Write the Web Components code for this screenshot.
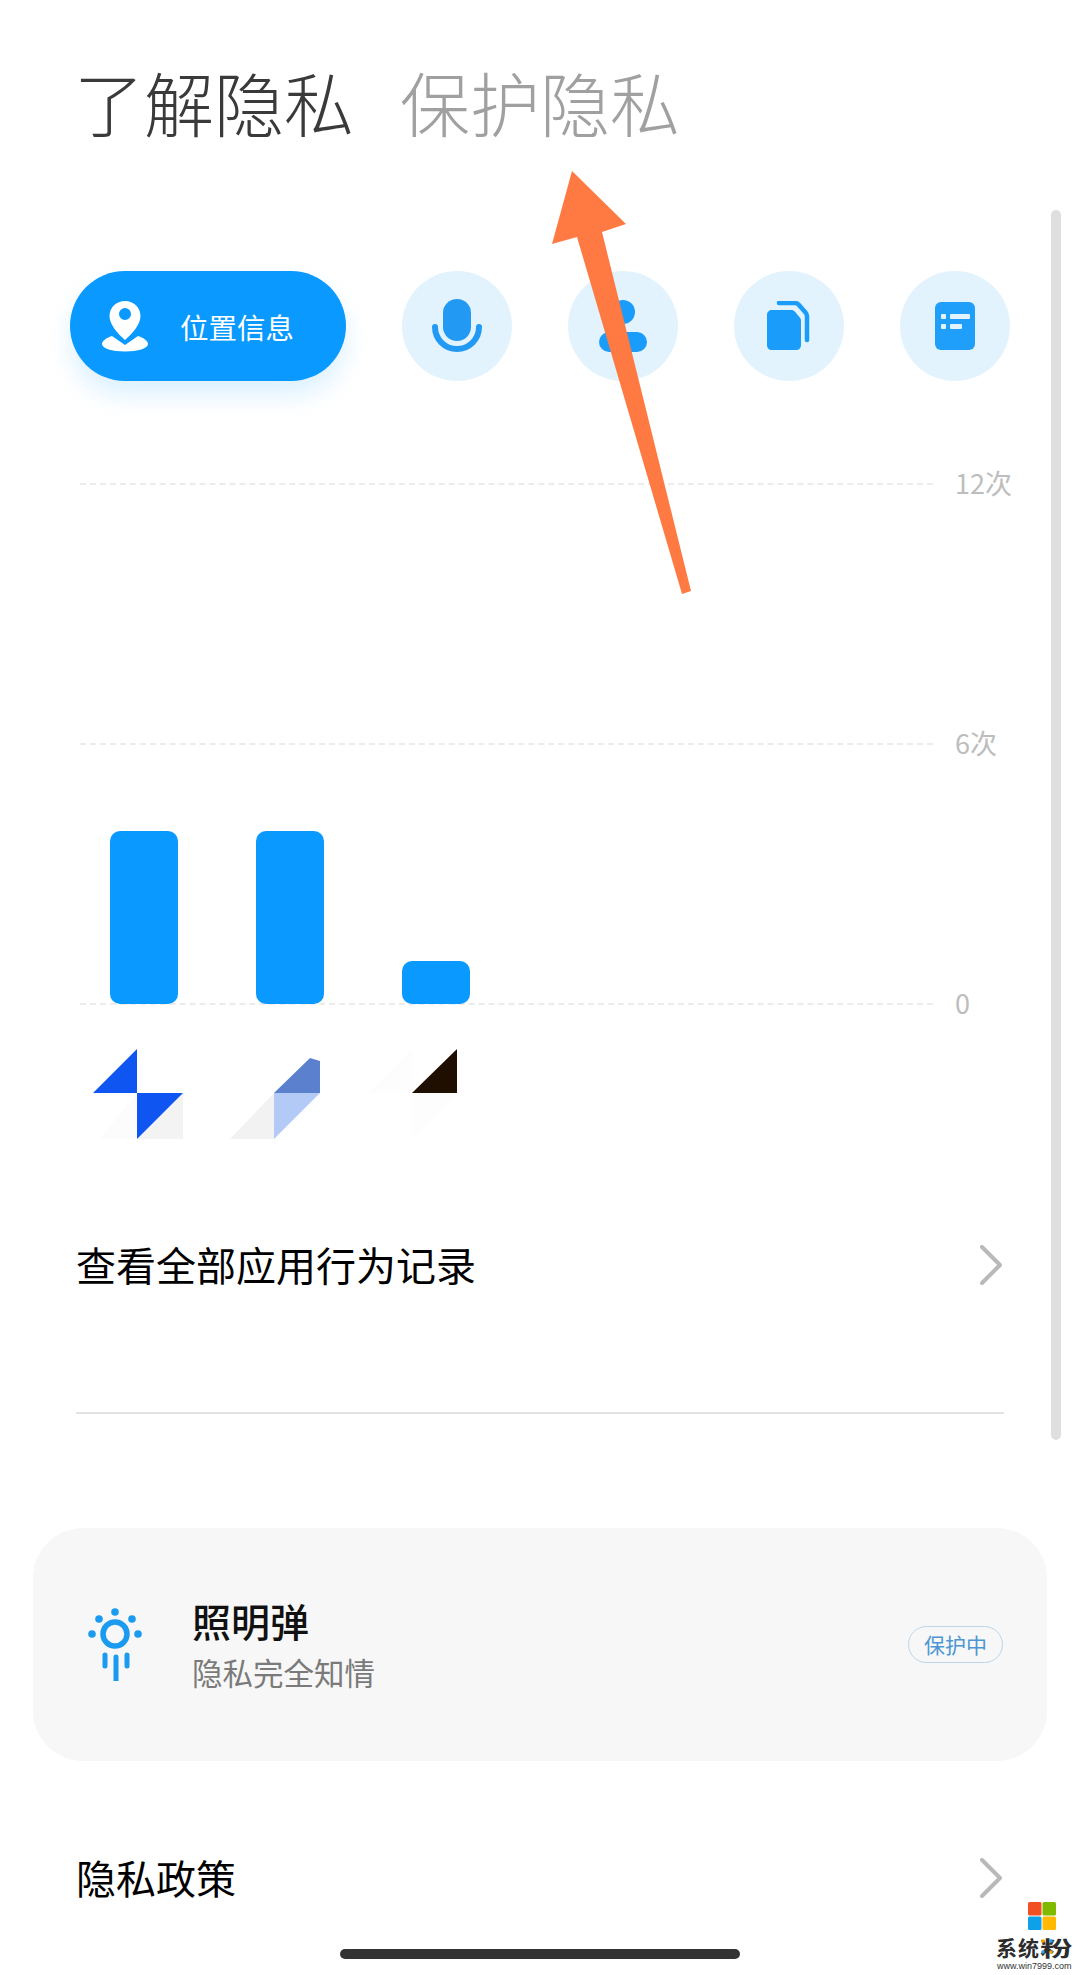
<!DOCTYPE html>
<html lang="zh">
<head>
<meta charset="utf-8">
<title>了解隐私</title>
<style>
  html, body { margin: 0; background: #fff; }
  body { width: 1080px; height: 1975px; overflow: hidden; position: relative; font-family: "Noto Sans CJK SC", "Noto Sans", sans-serif; }
</style>
</head>
<body>
<privacy-tabs></privacy-tabs>
<category-row>
  <category-pill label="位置信息">
    <svg viewBox="0 0 46 52" width="46" height="52"><path fill="#fff" d="M10 36C4 38 0 41 0 44c0 4.500 10 7.500 23 7.500S46 48.500 46 44c0-3-4-6-10-8L23 45z"/><path fill="#fff" fill-rule="evenodd" d="M23 1c8.600 0 15.500 6.600 15.500 15 0 8-7.500 17-15.500 24C15 33 7.500 24 7.500 16 7.500 7.600 14.400 1 23 1zm0 7a6 6 0 1 0 0 12 6 6 0 0 0 0-12z"/></svg>
  </category-pill>
  <category-circle>
    <svg viewBox="0 0 50 54" width="50" height="54"><rect x="11" y="0" width="28" height="42" rx="14" fill="#2299f2"/><path d="M3 28a22 22 0 0 0 44 0" fill="none" stroke="#2299f2" stroke-width="6" stroke-linecap="round"/></svg>
  </category-circle>
  <category-circle>
    <svg viewBox="0 0 48 52" width="48" height="52"><circle cx="24" cy="12" r="12" fill="#1a9cfb"/><rect x="0" y="32" width="48" height="20" rx="10" fill="#1a9cfb"/></svg>
  </category-circle>
  <category-circle>
    <svg viewBox="0 0 44 50" width="44" height="50"><path fill="#1a9cfb" d="M5 9h19c2 0 3 .6 4 1.800l5 6c.8 1 1 2 1 3.200V44c0 3-2 5-5 5H5c-3 0-5-2-5-5V14c0-3 2-5 5-5z"/><path fill="none" stroke="#1a9cfb" stroke-width="4.500" stroke-linecap="round" stroke-linejoin="round" d="M12 2h16c1.500 0 2.500.5 3.500 1.500l7 8c1 1.200 1.500 2.200 1.500 3.500v24"/></svg>
  </category-circle>
  <category-circle>
    <svg viewBox="0 0 40 48" width="40" height="48"><rect width="40" height="48" rx="6" fill="#1f9ffa"/><rect x="6" y="12" width="5" height="5" rx="1" fill="#e3f3fd"/><rect x="15" y="12" width="20" height="5" rx="1" fill="#e3f3fd"/><rect x="6" y="22" width="5" height="5" rx="1" fill="#e3f3fd"/><rect x="15" y="22" width="12" height="5" rx="1" fill="#e3f3fd"/></svg>
  </category-circle>
</category-row>
<usage-chart>
  <usage-bar slot="bars" height="173"></usage-bar>
  <usage-bar slot="bars" height="173"></usage-bar>
  <usage-bar slot="bars" height="43"></usage-bar>
</usage-chart>
<app-icons></app-icons>
<link-row label="查看全部应用行为记录" style="margin-top:80px"></link-row>
<thin-divider></thin-divider>
<feature-card title="照明弹" subtitle="隐私完全知情" badge="保护中"></feature-card>
<link-row label="隐私政策" style="margin-top:77px"></link-row>
<scroll-thumb></scroll-thumb>
<arrow-mark></arrow-mark>
<home-indicator></home-indicator>
<site-watermark></site-watermark>

<script>
function defineSimple(name, html) {
  let template = document.createElement('template');
  template.innerHTML = html;
  customElements.define(name, class extends HTMLElement {
    constructor() {
      super();
      this.attachShadow({mode: 'open'}).appendChild(template.content.cloneNode(true));
    }
  });
}

defineSimple('privacy-tabs', `
  <style>
    :host { display: flex; height: 219px; padding: 52px 0 0 74px; gap: 46px; font-size: 70px; line-height: 100px; font-weight: 300; }
    .on { color: #3a3a3a; }
    .off { color: #a0a0a0; }
  </style>
  <span class="on">了解隐私</span><span class="off">保护隐私</span>`);

defineSimple('category-row', `
  <style>
    :host { display: flex; gap: 56px; padding-left: 70px; height: 110px; }
  </style>
  <slot></slot>`);

class CategoryPill extends HTMLElement {
  constructor() {
    super();
    let root = this.attachShadow({mode: 'open'});
    root.innerHTML = `
      <style>
        :host { display: flex; align-items: center; box-sizing: border-box; width: 276px; height: 110px; padding-left: 32px; border-radius: 55px; background: #0a99ff; box-shadow: 0 14px 24px rgba(10,153,255,.14); color: #fff; font-size: 28.500px; }
        span { margin-left: 32px; }
        ::slotted(svg) { display: block; }
      </style>
      <slot></slot><span>${this.getAttribute('label')}</span>`;
  }
}
customElements.define('category-pill', CategoryPill);

defineSimple('category-circle', `
  <style>
    :host { display: flex; align-items: center; justify-content: center; width: 110px; height: 110px; border-radius: 50%; background: #e3f3fd; }
    ::slotted(svg) { display: block; }
  </style>
  <slot></slot>`);

defineSimple('usage-chart', `
  <style>
    :host { display: grid; margin: 83px 0 0 80px; width: 960px; height: 560px; }
    .lines, .bars { grid-area: 1 / 1; }
    .lines { display: flex; flex-direction: column; justify-content: space-between; }
    .row { display: flex; align-items: center; height: 40px; color: #bdbdbd; font-size: 27px; white-space: nowrap; }
    .row i { display: block; flex: none; width: 853px; margin-right: 22px; border-top: 2px dashed #ececec; }
    .row span { position: relative; top: -2px; }
    .bars { display: flex; align-items: flex-end; gap: 78px; padding: 0 0 20px 30px; }
  </style>
  <div class="lines">
    <div class="row"><i></i><span>12次</span></div>
    <div class="row"><i></i><span>6次</span></div>
    <div class="row"><i></i><span>0</span></div>
  </div>
  <div class="bars"><slot name="bars"></slot></div>`);

class UsageBar extends HTMLElement {
  constructor() {
    super();
    let root = this.attachShadow({mode: 'open'});
    root.innerHTML = `<style>
      :host { display: block; width: 68px; height: ${this.getAttribute('height')}px; background: #0a99ff; border-radius: 10px; }
    </style>`;
  }
}
customElements.define('usage-bar', UsageBar);

defineSimple('app-icons', `
  <style>
    :host { display: flex; margin: 21px 0 0 72px; height: 100px; }
    svg { display: block; width: 146px; height: 100px; }
  </style>
  <svg viewBox="72 1045 146 100">
    <path fill="#fcfcfc" d="M100 1139l37-46v46z"/>
    <path fill="#f3f3f3" d="M183 1093v46h-46z"/>
    <path fill="#0f55f2" d="M137 1049v44H93z"/>
    <path fill="#0f55f2" d="M137 1093h46l-46 46z"/>
  </svg>
  <svg viewBox="218 1045 146 100">
    <path fill="#f2f2f2" d="M230 1139l44-46v46z"/>
    <path fill="#b3caf6" d="M274 1093h46l-46 46z"/>
    <path fill="#5a80ce" d="M274 1093l36-35 10 3v32z"/>
  </svg>
  <svg viewBox="364 1045 146 100">
    <path fill="#fdfdfd" d="M368 1093l44-44v44z"/>
    <path fill="#fdfdfd" d="M412 1093h45l-45 46z"/>
    <path fill="#1e0f00" d="M412 1093l45-44v44z"/>
  </svg>`);

class LinkRow extends HTMLElement {
  constructor() {
    super();
    let root = this.attachShadow({mode: 'open'});
    root.innerHTML = `
      <style>
        :host { display: flex; align-items: center; justify-content: space-between; height: 80px; padding: 0 78px 0 76px; color: #000; font-size: 40px; }
        span { margin-bottom: 3px; }
        svg { display: block; }
      </style>
      <span>${this.getAttribute('label')}</span>
      <svg viewBox="0 0 22 40" width="22" height="40"><path d="M2 2l18 18L2 38" fill="none" stroke="#b9b9b9" stroke-width="4" stroke-linecap="round" stroke-linejoin="round"/></svg>`;
  }
}
customElements.define('link-row', LinkRow);

defineSimple('thin-divider', `
  <style>
    :host { display: block; height: 2px; margin: 107px 76px 0 76px; background: #e2e2e2; }
  </style>`);

class FeatureCard extends HTMLElement {
  constructor() {
    super();
    let root = this.attachShadow({mode: 'open'});
    root.innerHTML = `
      <style>
        :host { display: flex; align-items: center; height: 233px; margin: 114px 33px 0; padding: 0 44px 0 53px; border-radius: 50px; background: #f7f7f7; }
        svg { display: block; flex: none; margin-bottom: 7px; }
        .text { flex: 1; margin-left: 48px; padding-top: 1px; }
        .title { color: #111; font-size: 39px; line-height: 54px; font-weight: 500; }
        .sub { color: #7a7a7a; font-size: 30.500px; line-height: 51px; }
        .badge { box-sizing: border-box; width: 95px; height: 37px; border: 1px solid #bcd5ea; border-radius: 19px; color: #4d96d2; font-size: 21px; line-height: 35px; text-align: center; }
      </style>
      <svg viewBox="0 0 58 80" width="58" height="80" fill="#1a9bf0">
        <circle cx="29" cy="33" r="12" fill="none" stroke="#1a9bf0" stroke-width="5.500"/>
        <circle cx="29" cy="11" r="3.800"/><circle cx="13" cy="18" r="3.800"/><circle cx="46" cy="18" r="3.800"/><circle cx="6" cy="33" r="3.800"/><circle cx="52" cy="33" r="3.800"/>
        <path d="M19 54v11M41 54v11M30 56v24" fill="none" stroke="#1a9bf0" stroke-width="5" stroke-linecap="round"/>
      </svg>
      <div class="text">
        <div class="title">${this.getAttribute('title')}</div>
        <div class="sub">${this.getAttribute('subtitle')}</div>
      </div>
      <div class="badge">${this.getAttribute('badge')}</div>`;
  }
}
customElements.define('feature-card', FeatureCard);

defineSimple('scroll-thumb', `
  <style>
    :host { position: absolute; left: 1051px; top: 210px; width: 10px; height: 1230px; border-radius: 5px; background: #dfdfdf; }
  </style>`);

defineSimple('arrow-mark', `
  <style>
    :host { position: absolute; left: 552px; top: 171px; width: 140px; height: 423px; }
    svg { display: block; }
  </style>
  <svg viewBox="552 171 140 423" width="140" height="423"><path fill="#ff7a42" d="M572 171l54 53-24 8 89 359-9 3-105-357-25 7z"/></svg>`);

defineSimple('home-indicator', `
  <style>
    :host { position: absolute; left: 340px; top: 1949px; width: 400px; height: 10px; border-radius: 5px; background: #333; }
  </style>`);

defineSimple('site-watermark', `
  <style>
    :host { position: absolute; left: 994px; top: 1902px; width: 86px; height: 73px; display: flex; flex-direction: column; }
    svg.logo { display: block; margin-left: 34px; }
    .name { display: flex; gap: 0; height: 22px; margin: 6px 0 0 2px; color: #2c2c2c; font-size: 21px; line-height: 22px; font-weight: 700; white-space: nowrap; }
    .name span { margin-right: 1px; }
    .wide { position: relative; display: block; width: 34px; }
    .wide b { display: block; font-weight: 700; transform: scaleX(1.55); transform-origin: 0 50%; }
    .wide svg { position: absolute; left: 0; top: 1px; }
    .url { color: #333; font: 9px/12px "Liberation Sans", sans-serif; white-space: nowrap; margin: 2px 0 0 3px; }
  </style>
  <svg class="logo" viewBox="0 0 28 28" width="28" height="28">
    <rect width="13.500" height="13.500" rx="1.500" fill="#f25022"/><rect x="14.500" width="13.500" height="13.500" rx="1.500" fill="#7fba00"/>
    <rect y="14.500" width="13.500" height="13.500" rx="1.500" fill="#0ea0e8"/><rect x="14.500" y="14.500" width="13.500" height="13.500" rx="1.500" fill="#ffb900"/>
  </svg>
  <div class="name"><span>系</span><span>统</span><span class="wide"><b>粉</b><svg viewBox="0 0 14 20" width="14" height="20"><circle cx="3" cy="4" r="1.800" fill="#f5a800"/><circle cx="11" cy="4" r="1.800" fill="#2a9de8"/><circle cx="3" cy="15" r="1.800" fill="#2a9de8"/><circle cx="11" cy="15" r="1.800" fill="#f5a800"/></svg></span></div>
  <div class="url">www.win7999.com</div>`);
</script>
</body>
</html>
